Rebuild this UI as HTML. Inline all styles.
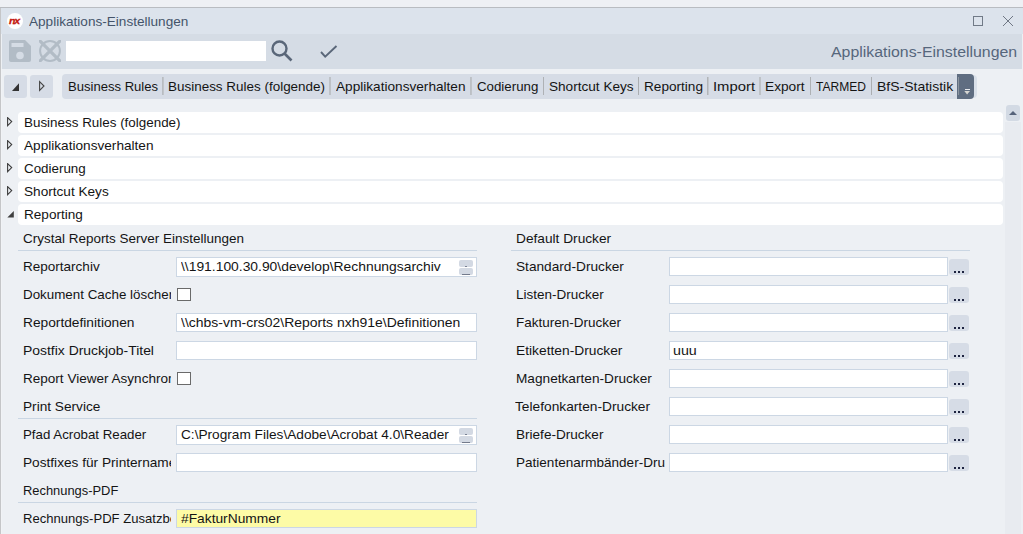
<!DOCTYPE html>
<html><head><meta charset="utf-8">
<style>
*{box-sizing:border-box;margin:0;padding:0}
html,body{width:1023px;height:534px;overflow:hidden;background:#eef0f4;font-family:"Liberation Sans",sans-serif;position:relative}
.a{position:absolute}
.t{position:absolute;white-space:pre;line-height:normal;font-family:"Liberation Sans",sans-serif}
.hdr{position:absolute;left:18px;width:985px;height:21px;background:#fff;border-radius:4px}
.tri{position:absolute;left:7px}
.inp{position:absolute;height:19px;background:#fff;border:1px solid #ccd7e4}
.lin{position:absolute;height:1px;background:#cad6e3}
.btn{position:absolute;width:20px;height:16px;background:#d6dce6;border-radius:3px}
.dot{position:absolute;width:2px;height:2px;background:#1d2340;top:12px}
.cb{position:absolute;left:177px;width:14px;height:13px;border:1px solid #6a6a6a;background:#fff}
</style></head><body>
<!-- window frame -->
<div class="a" style="left:0;top:7px;width:1023px;height:1px;background:#b9bcc1"></div>
<div class="a" style="left:0;top:8px;width:1px;height:526px;background:#c5c6c8"></div>
<div class="a" style="left:1px;top:8px;width:1022px;height:526px;background:#edf0f4"></div>
<!-- title bar -->
<div class="a" style="left:1px;top:8px;width:1022px;height:26px;background:#dce3ec"></div>
<div class="a" style="left:1px;top:69px;width:1px;height:465px;background:#f1f3f6"></div>
<div class="a" style="left:7px;top:13px;width:16px;height:16px;border-radius:50%;background:#fff"></div>
<div class="a" style="left:8.9px;top:12.8px;font:italic bold 9.8px/16px 'Liberation Sans',sans-serif;color:#c4160e;letter-spacing:-1.2px;transform:scaleX(1.08);transform-origin:0 0;-webkit-text-stroke:0.3px #c4160e">nx</div>
<!-- max / close -->
<div class="a" style="left:973px;top:16px;width:10px;height:10px;border:1px solid #717a87"></div>
<svg class="a" style="left:1002px;top:15px" width="12" height="12" viewBox="0 0 12 12"><path d="M1 1L11 11M11 1L1 11" stroke="#6f7784" stroke-width="1"/></svg>
<!-- toolbar -->
<div class="a" style="left:2px;top:34px;width:1020px;height:35px;background:#d5dce5"></div>
<svg class="a" style="left:9px;top:40px" width="22" height="22" viewBox="0 0 22 22">
<path d="M2 0 H16 L22 6 V20 Q22 22 20 22 H2 Q0 22 0 20 V2 Q0 0 2 0 Z" fill="#b2bcc6"/>
<rect x="2.5" y="3" width="12" height="4" fill="#d5dce5"/>
<circle cx="11" cy="15.5" r="3.8" fill="#d5dce5"/>
</svg>
<svg class="a" style="left:39px;top:40px;overflow:hidden" width="22" height="22" viewBox="0 0 22 22">
<circle cx="11" cy="11" r="9.9" fill="none" stroke="#b2bcc6" stroke-width="2"/>
<path d="M-1 -1 L23 23 M23 -1 L-1 23" stroke="#b2bcc6" stroke-width="3.2"/>
</svg>
<div class="a" style="left:66px;top:41px;width:200px;height:20px;background:#fff"></div>
<svg class="a" style="left:270px;top:39px" width="24" height="24" viewBox="0 0 24 24">
<circle cx="9.5" cy="9.5" r="7" fill="none" stroke="#5a6779" stroke-width="2.4"/>
<path d="M14.5 14.5 L21.5 21.5" stroke="#5a6779" stroke-width="2.6"/>
</svg>
<svg class="a" style="left:320px;top:45px" width="18" height="14" viewBox="0 0 18 14">
<path d="M1 7 L5.2 11.6 L16.5 1" fill="none" stroke="#5a6779" stroke-width="1.9"/>
</svg>
<!-- nav buttons -->
<div class="a" style="left:4px;top:75px;width:23px;height:23px;background:#d6dce6;border-radius:3px"></div>
<svg class="a" style="left:4px;top:75px" width="23" height="23" viewBox="0 0 23 23"><path d="M8 16 L15 8.2 L15 16 Z" fill="#333"/></svg>
<div class="a" style="left:30px;top:75px;width:23px;height:23px;background:#d6dce6;border-radius:3px"></div>
<svg class="a" style="left:30px;top:75px" width="23" height="23" viewBox="0 0 23 23"><path d="M9.6 6.6 L14 11 L9.6 15.4 Z" fill="none" stroke="#444" stroke-width="1.1"/></svg>
<!-- tab bar -->
<div class="a" style="left:62px;top:74px;width:912px;height:25px;background:#d6dce6;border-radius:4px"></div>
<div class="a" style="left:968px;top:75px;width:9px;height:23px;background:#d9e0e9;border-radius:0 4px 4px 0"></div>
<div class="a" style="left:957px;top:74px;width:17px;height:25px;background:#5f6d81;border-radius:0 4px 4px 0"></div>
<div class="a" style="left:958px;top:77px;width:1px;height:18px;background:#8a939e"></div>
<div class="a" style="left:965px;top:89px;width:5px;height:1px;background:#e8eaee"></div>
<svg class="a" style="left:963px;top:90px" width="8" height="6" viewBox="0 0 8 6"><path d="M1.3 0.9 L7 0.9 L4.1 4.4 Z" fill="#d6d6d2"/></svg>
<div class="a" style="left:162px;top:77px;width:1px;height:18px;background:#b8bcc1"></div>
<div class="a" style="left:163px;top:77px;width:1px;height:18px;background:#c1c5ca"></div>
<div class="a" style="left:329px;top:77px;width:1px;height:18px;background:#bdc1c6"></div>
<div class="a" style="left:330px;top:77px;width:1px;height:18px;background:#bdc1c6"></div>
<div class="a" style="left:470px;top:77px;width:1px;height:18px;background:#bcc0c5"></div>
<div class="a" style="left:471px;top:77px;width:1px;height:18px;background:#bfc3c8"></div>
<div class="a" style="left:543px;top:77px;width:1px;height:18px;background:#aeb1b5"></div>
<div class="a" style="left:638px;top:77px;width:1px;height:18px;background:#abaeb1"></div>
<div class="a" style="left:707px;top:77px;width:1px;height:18px;background:#b1b4b8"></div>
<div class="a" style="left:708px;top:77px;width:1px;height:18px;background:#c4c8cd"></div>
<div class="a" style="left:759px;top:77px;width:1px;height:18px;background:#bec2c6"></div>
<div class="a" style="left:760px;top:77px;width:1px;height:18px;background:#bec2c6"></div>
<div class="a" style="left:810px;top:77px;width:1px;height:18px;background:#aeb1b4"></div>
<div class="a" style="left:871px;top:77px;width:1px;height:18px;background:#abaeb1"></div>
<!-- scrollbar -->
<div class="a" style="left:1005px;top:122px;width:16px;height:412px;background:#e8ebf0"></div>
<div class="a" style="left:1006px;top:105px;width:14px;height:16px;background:#d3dae4;border-radius:3px"></div>
<svg class="a" style="left:1006px;top:105px" width="14" height="16" viewBox="0 0 14 16"><path d="M3 10 L11 10 L7 6 Z" fill="#56637a"/></svg>
<!-- expander headers -->
<div class="hdr" style="top:112px"></div>
<div class="hdr" style="top:135px"></div>
<div class="hdr" style="top:158px"></div>
<div class="hdr" style="top:181px"></div>
<div class="hdr" style="top:204px"></div>
<svg class="tri" style="top:117px" width="7" height="10" viewBox="0 0 7 10"><path d="M0.6 0.6 L4.7 4.6 L0.6 8.6 Z" fill="none" stroke="#3c3c3c" stroke-width="1.1"/></svg>
<svg class="tri" style="top:140px" width="7" height="10" viewBox="0 0 7 10"><path d="M0.6 0.6 L4.7 4.6 L0.6 8.6 Z" fill="none" stroke="#3c3c3c" stroke-width="1.1"/></svg>
<svg class="tri" style="top:163px" width="7" height="10" viewBox="0 0 7 10"><path d="M0.6 0.6 L4.7 4.6 L0.6 8.6 Z" fill="none" stroke="#3c3c3c" stroke-width="1.1"/></svg>
<svg class="tri" style="top:186px" width="7" height="10" viewBox="0 0 7 10"><path d="M0.6 0.6 L4.7 4.6 L0.6 8.6 Z" fill="none" stroke="#3c3c3c" stroke-width="1.1"/></svg>
<svg class="tri" style="top:209px" width="8" height="10" viewBox="0 0 8 10"><path d="M0.3 8.4 L6.8 2 L6.8 8.4 Z" fill="#404040"/></svg>
<div class="lin" style="left:18px;top:250px;width:459px"></div>
<div class="lin" style="left:18px;top:418px;width:459px"></div>
<div class="lin" style="left:18px;top:502px;width:459px"></div>
<div class="lin" style="left:511px;top:250px;width:459px"></div>
<div class="inp" style="left:176px;top:257px;width:301px;height:20px;background:#fff"></div>
<div class="inp" style="left:176px;top:313px;width:301px;height:19px;background:#fff"></div>
<div class="inp" style="left:176px;top:341px;width:301px;height:19px;background:#fff"></div>
<div class="inp" style="left:176px;top:425px;width:301px;height:20px;background:#fff"></div>
<div class="inp" style="left:176px;top:453px;width:301px;height:19px;background:#fff"></div>
<div class="inp" style="left:176px;top:509px;width:301px;height:19px;background:#fdfba6"></div>
<div class="cb" style="top:288px"></div>
<div class="cb" style="top:372px"></div>
<div class="a" style="left:459px;top:260px;width:14px;height:7px;background:#d3d9e3;border-radius:2px"></div>
<div class="a" style="left:459px;top:268px;width:14px;height:7px;background:#d3d9e3;border-radius:2px"></div>
<div class="a" style="left:465px;top:266px;width:2px;height:1px;background:#7a8192"></div>
<div class="a" style="left:462px;top:274px;width:8px;height:1px;background:#737a8b"></div>
<div class="a" style="left:459px;top:428px;width:14px;height:7px;background:#d3d9e3;border-radius:2px"></div>
<div class="a" style="left:459px;top:436px;width:14px;height:7px;background:#d3d9e3;border-radius:2px"></div>
<div class="a" style="left:465px;top:434px;width:2px;height:1px;background:#7a8192"></div>
<div class="a" style="left:462px;top:442px;width:8px;height:1px;background:#737a8b"></div>
<div class="inp" style="left:669px;top:257px;width:279px"></div>
<div class="btn" style="left:949px;top:259px"><div class="dot" style="left:5px"></div><div class="dot" style="left:9px"></div><div class="dot" style="left:13px"></div></div>
<div class="inp" style="left:669px;top:285px;width:279px"></div>
<div class="btn" style="left:949px;top:287px"><div class="dot" style="left:5px"></div><div class="dot" style="left:9px"></div><div class="dot" style="left:13px"></div></div>
<div class="inp" style="left:669px;top:313px;width:279px"></div>
<div class="btn" style="left:949px;top:315px"><div class="dot" style="left:5px"></div><div class="dot" style="left:9px"></div><div class="dot" style="left:13px"></div></div>
<div class="inp" style="left:669px;top:341px;width:279px"></div>
<div class="btn" style="left:949px;top:343px"><div class="dot" style="left:5px"></div><div class="dot" style="left:9px"></div><div class="dot" style="left:13px"></div></div>
<div class="inp" style="left:669px;top:369px;width:279px"></div>
<div class="btn" style="left:949px;top:371px"><div class="dot" style="left:5px"></div><div class="dot" style="left:9px"></div><div class="dot" style="left:13px"></div></div>
<div class="inp" style="left:669px;top:397px;width:279px"></div>
<div class="btn" style="left:949px;top:399px"><div class="dot" style="left:5px"></div><div class="dot" style="left:9px"></div><div class="dot" style="left:13px"></div></div>
<div class="inp" style="left:669px;top:425px;width:279px"></div>
<div class="btn" style="left:949px;top:427px"><div class="dot" style="left:5px"></div><div class="dot" style="left:9px"></div><div class="dot" style="left:13px"></div></div>
<div class="inp" style="left:669px;top:453px;width:279px"></div>
<div class="btn" style="left:949px;top:455px"><div class="dot" style="left:5px"></div><div class="dot" style="left:9px"></div><div class="dot" style="left:13px"></div></div>
<div class="t" style="left:29.00px;top:14.0px;font-size:13.5px;color:#44546a"><span style="display:inline-block;transform:scaleX(1.0063);transform-origin:0 0">Applikations-Einstellungen</span></div>
<div class="t" style="left:831.00px;top:44.0px;font-size:14px;color:#56667c"><span style="display:inline-block;transform:scaleX(1.1338);transform-origin:0 0">Applikations-Einstellungen</span></div>
<div class="t" style="left:68.00px;top:79.0px;font-size:13.3px;color:#141414"><span style="display:inline-block;transform:scaleX(0.9828);transform-origin:0 0">Business Rules</span></div>
<div class="t" style="left:168.00px;top:79.0px;font-size:13.3px;color:#141414"><span style="display:inline-block;transform:scaleX(1.0117);transform-origin:0 0">Business Rules (folgende)</span></div>
<div class="t" style="left:336.00px;top:79.0px;font-size:13.3px;color:#141414"><span style="display:inline-block;transform:scaleX(1.0247);transform-origin:0 0">Applikationsverhalten</span></div>
<div class="t" style="left:477.00px;top:79.0px;font-size:13.3px;color:#141414"><span style="display:inline-block;transform:scaleX(0.9992);transform-origin:0 0">Codierung</span></div>
<div class="t" style="left:549.00px;top:79.0px;font-size:13.3px;color:#141414"><span style="display:inline-block;transform:scaleX(1.0221);transform-origin:0 0">Shortcut Keys</span></div>
<div class="t" style="left:644.00px;top:79.0px;font-size:13.3px;color:#141414"><span style="display:inline-block;transform:scaleX(1.0224);transform-origin:0 0">Reporting</span></div>
<div class="t" style="left:713.00px;top:79.0px;font-size:13.3px;color:#141414"><span style="display:inline-block;transform:scaleX(1.1145);transform-origin:0 0">Import</span></div>
<div class="t" style="left:765.00px;top:79.0px;font-size:13.3px;color:#141414"><span style="display:inline-block;transform:scaleX(1.0309);transform-origin:0 0">Export</span></div>
<div class="t" style="left:816.00px;top:79.0px;font-size:13.3px;color:#141414"><span style="display:inline-block;transform:scaleX(0.9069);transform-origin:0 0">TARMED</span></div>
<div class="t" style="left:877.00px;top:79.0px;font-size:13.3px;color:#141414"><span style="display:inline-block;transform:scaleX(1.0526);transform-origin:0 0">BfS-Statistik</span></div>
<div class="t" style="left:24.00px;top:115.0px;font-size:13.3px;color:#141414"><span style="display:inline-block;transform:scaleX(1.0085);transform-origin:0 0">Business Rules (folgende)</span></div>
<div class="t" style="left:24.00px;top:138.0px;font-size:13.3px;color:#141414"><span style="display:inline-block;transform:scaleX(1.0247);transform-origin:0 0">Applikationsverhalten</span></div>
<div class="t" style="left:24.00px;top:161.0px;font-size:13.3px;color:#141414"><span style="display:inline-block;transform:scaleX(1.0059);transform-origin:0 0">Codierung</span></div>
<div class="t" style="left:24.00px;top:184.0px;font-size:13.3px;color:#141414"><span style="display:inline-block;transform:scaleX(1.0233);transform-origin:0 0">Shortcut Keys</span></div>
<div class="t" style="left:24.00px;top:207.0px;font-size:13.3px;color:#141414"><span style="display:inline-block;transform:scaleX(1.0206);transform-origin:0 0">Reporting</span></div>
<div class="t" style="left:23.00px;top:231.0px;font-size:13.3px;color:#141414"><span style="display:inline-block;transform:scaleX(1.0134);transform-origin:0 0">Crystal Reports Server Einstellungen</span></div>
<div class="t" style="left:23.00px;top:259.0px;font-size:13.3px;color:#141414;width:148.30px;overflow:hidden"><span style="display:inline-block;transform:scaleX(1.0168);transform-origin:0 0">Reportarchiv</span></div>
<div class="t" style="left:23.00px;top:287.0px;font-size:13.3px;color:#141414;width:148.30px;overflow:hidden"><span style="display:inline-block;transform:scaleX(1.0059);transform-origin:0 0">Dokument Cache löscher</span></div>
<div class="t" style="left:23.00px;top:315.0px;font-size:13.3px;color:#141414;width:148.30px;overflow:hidden"><span style="display:inline-block;transform:scaleX(1.0330);transform-origin:0 0">Reportdefinitionen</span></div>
<div class="t" style="left:23.00px;top:343.0px;font-size:13.3px;color:#141414;width:148.30px;overflow:hidden"><span style="display:inline-block;transform:scaleX(1.0467);transform-origin:0 0">Postfix Druckjob-Titel</span></div>
<div class="t" style="left:23.00px;top:371.0px;font-size:13.3px;color:#141414;width:148.30px;overflow:hidden"><span style="display:inline-block;transform:scaleX(1.0181);transform-origin:0 0">Report Viewer Asynchron</span></div>
<div class="t" style="left:23.00px;top:399.0px;font-size:13.3px;color:#141414;width:148.30px;overflow:hidden"><span style="display:inline-block;transform:scaleX(1.0264);transform-origin:0 0">Print Service</span></div>
<div class="t" style="left:23.00px;top:427.0px;font-size:13.3px;color:#141414;width:148.30px;overflow:hidden"><span style="display:inline-block;transform:scaleX(0.9988);transform-origin:0 0">Pfad Acrobat Reader</span></div>
<div class="t" style="left:23.00px;top:455.0px;font-size:13.3px;color:#141414;width:148.30px;overflow:hidden"><span style="display:inline-block;transform:scaleX(1.0271);transform-origin:0 0">Postfixes für Printername</span></div>
<div class="t" style="left:23.00px;top:483.0px;font-size:13.3px;color:#141414;width:148.30px;overflow:hidden"><span style="display:inline-block;transform:scaleX(0.9695);transform-origin:0 0">Rechnungs-PDF</span></div>
<div class="t" style="left:23.00px;top:511.0px;font-size:13.3px;color:#141414;width:148.30px;overflow:hidden"><span style="display:inline-block;transform:scaleX(0.9827);transform-origin:0 0">Rechnungs-PDF Zusatzbezeichnung</span></div>
<div class="t" style="left:516.00px;top:231.0px;font-size:13.3px;color:#141414"><span style="display:inline-block;transform:scaleX(1.0301);transform-origin:0 0">Default Drucker</span></div>
<div class="t" style="left:516.00px;top:259.0px;font-size:13.3px;color:#141414;width:148.50px;overflow:hidden"><span style="display:inline-block;transform:scaleX(1.0279);transform-origin:0 0">Standard-Drucker</span></div>
<div class="t" style="left:516.00px;top:287.0px;font-size:13.3px;color:#141414;width:148.50px;overflow:hidden"><span style="display:inline-block;transform:scaleX(1.0158);transform-origin:0 0">Listen-Drucker</span></div>
<div class="t" style="left:516.00px;top:315.0px;font-size:13.3px;color:#141414;width:148.50px;overflow:hidden"><span style="display:inline-block;transform:scaleX(1.0142);transform-origin:0 0">Fakturen-Drucker</span></div>
<div class="t" style="left:516.00px;top:343.0px;font-size:13.3px;color:#141414;width:148.50px;overflow:hidden"><span style="display:inline-block;transform:scaleX(1.0365);transform-origin:0 0">Etiketten-Drucker</span></div>
<div class="t" style="left:516.00px;top:371.0px;font-size:13.3px;color:#141414;width:148.50px;overflow:hidden"><span style="display:inline-block;transform:scaleX(1.0267);transform-origin:0 0">Magnetkarten-Drucker</span></div>
<div class="t" style="left:515.00px;top:399.0px;font-size:13.3px;color:#141414;width:149.50px;overflow:hidden"><span style="display:inline-block;transform:scaleX(1.0326);transform-origin:0 0">Telefonkarten-Drucker</span></div>
<div class="t" style="left:516.00px;top:427.0px;font-size:13.3px;color:#141414;width:148.50px;overflow:hidden"><span style="display:inline-block;transform:scaleX(1.0201);transform-origin:0 0">Briefe-Drucker</span></div>
<div class="t" style="left:516.00px;top:455.0px;font-size:13.3px;color:#141414;width:148.50px;overflow:hidden"><span style="display:inline-block;transform:scaleX(1.0180);transform-origin:0 0">Patientenarmbänder-Drucker</span></div>
<div class="t" style="left:181.00px;top:259.0px;font-size:13.3px;color:#141414"><span style="display:inline-block;transform:scaleX(1.0422);transform-origin:0 0">\\191.100.30.90\develop\Rechnungsarchiv</span></div>
<div class="t" style="left:181.00px;top:315.0px;font-size:13.3px;color:#141414"><span style="display:inline-block;transform:scaleX(1.0500);transform-origin:0 0">\\chbs-vm-crs02\Reports nxh91e\Definitionen</span></div>
<div class="t" style="left:181.00px;top:427.0px;font-size:13.3px;color:#141414"><span style="display:inline-block;transform:scaleX(1.0265);transform-origin:0 0">C:\Program Files\Adobe\Acrobat 4.0\Reader</span></div>
<div class="t" style="left:181.00px;top:511.0px;font-size:13.3px;color:#141414"><span style="display:inline-block;transform:scaleX(1.0360);transform-origin:0 0">#FakturNummer</span></div>
<div class="t" style="left:673.00px;top:343.0px;font-size:13.3px;color:#141414"><span style="display:inline-block;transform:scaleX(1.0732);transform-origin:0 0">uuu</span></div>
</body></html>
